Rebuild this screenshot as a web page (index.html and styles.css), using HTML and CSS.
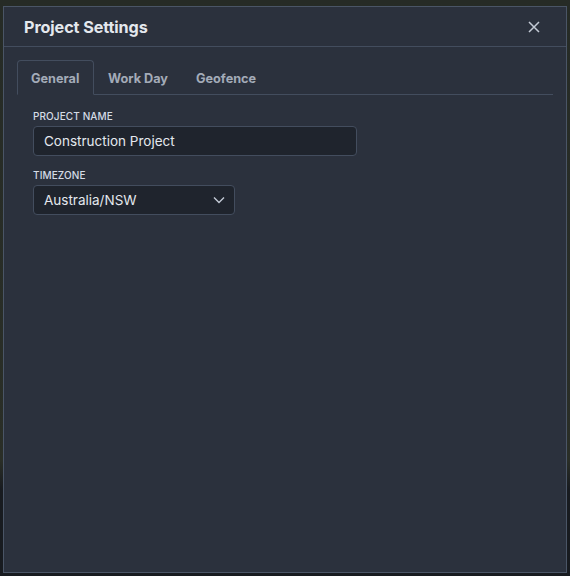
FILE: index.html
```html
<!DOCTYPE html>
<html>
<head>
<meta charset="utf-8">
<link rel="stylesheet" href="styles.css">
</head>
<body>
<div class="backdrop">
  <div class="dialog">
    <div class="header">
      <h1 class="title">Project Settings</h1>
      <button class="close" aria-label="Close">
        <svg width="12" height="12" viewBox="0 0 12 12"><path d="M1 1L11 11M11 1L1 11" stroke="#c3cad5" stroke-width="1.5" fill="none"/></svg>
      </button>
    </div>
    <div class="body">
      <div class="tabs">
        <div class="tab active">General</div>
        <div class="tab">Work Day</div>
        <div class="tab">Geofence</div>
      </div>
      <div class="panel">
        <div class="field">
          <label class="label">PROJECT NAME</label>
          <div class="input wide">Construction Project</div>
        </div>
        <div class="field">
          <label class="label">TIMEZONE</label>
          <div class="input select">
            <span>Australia/NSW</span>
            <svg width="12" height="8" viewBox="0 0 12 8"><path d="M1 1.5L6 6.5L11 1.5" stroke="#c3cad5" stroke-width="1.4" fill="none"/></svg>
          </div>
        </div>
      </div>
    </div>
  </div>
</div>
</body>
</html>
```

FILE: styles.css
```css
html, body {
  margin: 0;
  padding: 0;
}
body {
  background: #1c2022;
  font-family: Inter, "Noto Sans", sans-serif;
  width: 570px;
  height: 576px;
  overflow: hidden;
}
.backdrop {
  padding: 6px 3px 3px 3px;
  background: linear-gradient(180deg, #262b26 0%, #2a2e27 80%, #181b20 85%, #181b20 100%);
  height: 567px;
}
.dialog {
  width: 562px;
  height: 565px;
  background: #2b313d;
  border: 1px solid #4a5566;
  display: flex;
  flex-direction: column;
}
.header {
  height: 39px;
  border-bottom: 1px solid #434d5e;
  display: flex;
  align-items: center;
  justify-content: space-between;
  padding: 0 26px 0 20px;
}
.title {
  margin: 0;
  font-size: 16.2px;
  font-weight: 700;
  color: #e4e8ee;
  letter-spacing: -0.1px;
}
.close {
  background: none;
  border: none;
  padding: 0;
  display: flex;
  cursor: pointer;
}
.body {
  padding: 13px 13px 0 13px;
}
.tabs {
  display: flex;
  border-bottom: 1px solid #434d5e;
  height: 34px;
}
.tab {
  padding: 0 13px;
  line-height: 35px;
  font-size: 12.7px;
  font-weight: 700;
  color: #a3abb8;
  border: 1px solid transparent;
  border-radius: 4px 4px 0 0;
  box-sizing: border-box;
  height: 35px;
}
.tab:first-child {
  padding: 0 13px 0 13px;
  width: 77px;
}
.tab.active {
  border-color: #434d5e;
  border-bottom-color: #2b313d;
  background: #2b313d;
}
.panel {
  padding: 15px 16px;
  display: flex;
  flex-direction: column;
  gap: 13px;
}
.field {
  display: flex;
  flex-direction: column;
  gap: 4px;
}
.label {
  font-size: 10px;
  font-weight: 500;
  color: #d5dce6;
  letter-spacing: 0.1px;
}
.input {
  box-sizing: border-box;
  height: 30px;
  background: #1f242d;
  border: 1px solid #434d5e;
  border-radius: 4px;
  padding: 0 10px;
  font-size: 13.5px;
  color: #e4e8ee;
  display: flex;
  align-items: center;
}
.wide {
  width: 324px;
}
.select {
  width: 202px;
  justify-content: space-between;
  padding-right: 9px;
}
```
